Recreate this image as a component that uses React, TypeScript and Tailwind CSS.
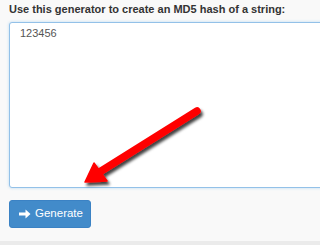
import React from "react";

export default function App() {
  return (
    <div className="relative w-full h-[245px] overflow-hidden bg-[#f9f9f9] flex flex-col" style={{ fontFamily: '"Liberation Sans", Arial, sans-serif' }}>
      <div className="flex-1 pl-[9px]">
        <div className="pt-[3px] text-[11px] leading-[12px] font-bold text-[#333] whitespace-nowrap">
          Use this generator to create an MD5 hash of a string:
        </div>
        <textarea
          readOnly
          defaultValue="123456"
          className="mt-[7px] block w-[340px] h-[166px] resize-none rounded-[3px] border border-[#93c1e8] bg-white pl-[10px] pt-[3px] text-[11px] leading-[15px] text-[#555] outline-none shadow-[0_0_3px_rgba(102,175,233,0.45)]"
          style={{ fontFamily: '"Liberation Sans", Arial, sans-serif' }}
        />
        <button className="mt-[12px] flex h-[28px] w-[82px] items-center gap-[4px] rounded-[3px] border border-[#3b82c4] bg-[#428bca] pl-[9px] text-[11.5px] text-white">
          <svg width="12" height="10" viewBox="0 0 12 10">
            <path d="M0 3.5 H6.5 V0.5 L11.5 5 L6.5 9.5 V6.5 H0 Z" fill="white" strokeLinejoin="round" />
          </svg>
          <span>Generate</span>
        </button>
      </div>
      <div className="h-[4px] bg-[#ebebeb]" />
      <svg className="absolute left-0 top-0 pointer-events-none" width="300" height="245">
        <defs>
          <filter id="sh" x="-20%" y="-20%" width="140%" height="140%">
            <feDropShadow dx="2" dy="3" stdDeviation="1.6" floodColor="#000" floodOpacity="0.75" />
          </filter>
        </defs>
        <g filter="url(#sh)">
          <line x1="197" y1="111" x2="98" y2="173" stroke="#f00" strokeWidth="7.5" strokeLinecap="round" />
          <polygon points="85,182 107,181 94,163" fill="#f00" stroke="#f00" strokeWidth="1.5" strokeLinejoin="round" />
        </g>
      </svg>
    </div>
  );
}
